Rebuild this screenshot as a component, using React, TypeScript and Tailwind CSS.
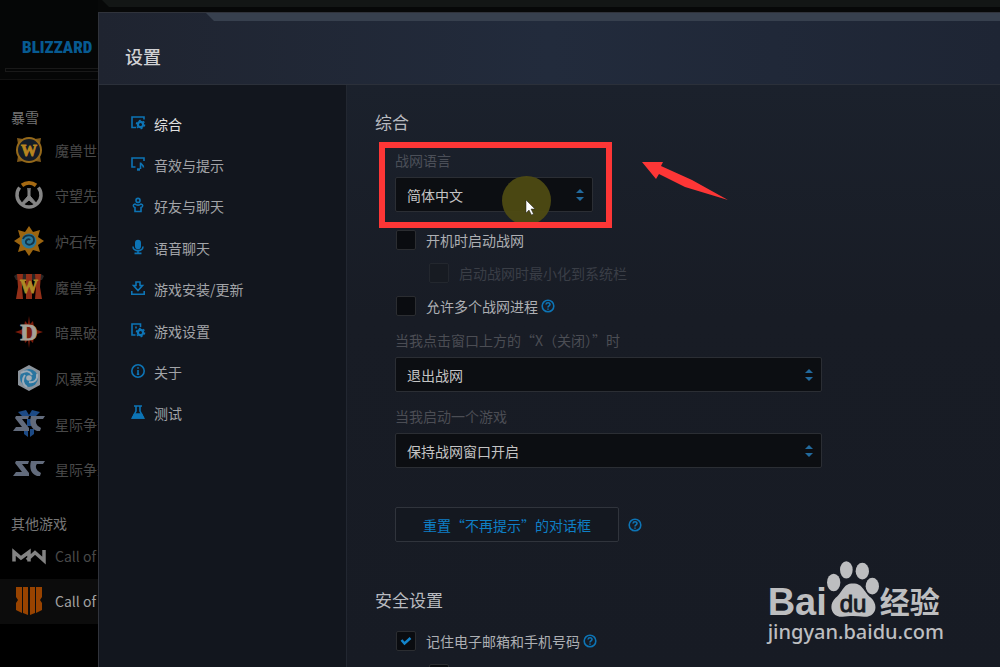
import { useState } from 'react';
import type { ReactNode } from 'react';
import clsx from 'clsx';

type Item = { label: string; icon: ReactNode };

function Letter({ y = 20, size = 17, fill, children }: { y?: number; size?: number; fill: string; children: string }) {
  return (
    <text x="14" y={y} fontSize={size} fontWeight="700" fontFamily="Liberation Serif, serif" textAnchor="middle" fill={fill} stroke={fill} strokeWidth=".8">
      {children}
    </text>
  );
}

function StarCraft({ wings }: { wings?: boolean }) {
  return (
    <>
      {wings && <path d="M3 2l8-2 3 5 3-5 8 2-4 4H7zM9 19h4v8l-4-3zM15 19h4v5l-4 3zM12 9h4v7h-4z" fill="#1c4a86" />}
      <path d="M1 6h13l-1 3H7l7 9v3H-2l3-4h6L0 8z" fill="#626b7c" />
      <path d="M16 6h14l-2 3h-6c-2 2-1 5 1 7l3 2-1 3h-3c-6-2-8-8-6-15z" fill="#626b7c" />
    </>
  );
}

const blizzardGames: Item[] = [
  {
    label: '魔兽世界',
    icon: (
      <>
        <path d="M2 2l6 1h12l6-1-1 6v12l1 6-6-1H8l-6 1 1-6V8z" fill="#80591a" />
        <circle cx="14" cy="14" r="12" fill="#141c26" stroke="#95691a" strokeWidth="2" />
        <Letter fill="#b8861f" size={16} y={20}>W</Letter>
      </>
    ),
  },
  {
    label: '守望先锋',
    icon: (
      <>
        <path d="M7 4.300a12 12 0 0 1 14 0" fill="none" stroke="#a66a12" strokeWidth="4" />
        <path d="M4.600 6.500a12 12 0 1 0 18.800 0" fill="none" stroke="#858585" strokeWidth="3.500" />
        <path d="M13 7v8l-7 8 2 1 6-5 6 5 2-1-7-8V7l-1 7z" fill="#858585" stroke="#858585" />
      </>
    ),
  },
  {
    label: '炉石传说',
    icon: (
      <>
        <path d="M14-1l4 6 7-2-2 7 6 4-6 4 2 7-7-2-4 6-4-6-7 2 2-7-6-4 6-4-2-7 7 2z" fill="#9c6510" />
        <circle cx="14" cy="14" r="7.500" fill="#2b7899" />
        <path d="M8 12c2-5 11-5 11 1 0 5-6 6-8 3-1-3 3-5 4-3" fill="none" stroke="#123346" strokeWidth="1.800" />
      </>
    ),
  },
  {
    label: '魔兽争霸 III',
    icon: (
      <>
        <path d="M-1 3l3-2h24l3 2-2 4H1z" fill="#292525" />
        <path d="M2 1h6l-1 13 1 12H1l2-12zM11 1h6v25h-6zM20 1h6l-1 13 2 12h-7l1-12z" fill="#922f18" />
        <Letter fill="#ae8b27" size={18} y={20}>W</Letter>
      </>
    ),
  },
  {
    label: '暗黑破坏神',
    icon: (
      <>
        <path d="M14-2l1 8 3-3 1 6 3 3 6 2-6 2-3 3-1 6-3-3-1 8-1-8-3 3-1-6-3-3-6-2 6-2 3-3 1-6 3 3z" fill="#7a1b0b" />
        <Letter fill="#a6a298" size={24} y={22}>D</Letter>
      </>
    ),
  },
  {
    label: '风暴英雄',
    icon: (
      <>
        <path d="M14 1l11 6v14l-11 6-11-6V7z" fill="#8b939b" />
        <circle cx="14" cy="14" r="9" fill="#2875a0" />
        <path d="M6 9c5-3 9-2 11 2M22 10c1 6-3 9-8 8M12 23c-5-3-5-8-2-12" fill="none" stroke="#9cabb7" strokeWidth="2" />
        <circle cx="14" cy="14" r="2.800" fill="#a4adb4" />
      </>
    ),
  },
  { label: '星际争霸 II', icon: <StarCraft wings /> },
  { label: '星际争霸', icon: <StarCraft /> },
];

const otherGames: Item[] = [
  {
    label: 'Call of Duty: MW',
    icon: <path d="M-1 19.500V10l7 6 8-6v9.500M12 18l8-7.500 9 8V8" fill="none" stroke="#838383" strokeWidth="3.500" />,
  },
  {
    label: 'Call of Duty: BO4',
    icon: <path d="M1 0h6v26l-6-3v-7l2-3-2-3zM8 0h5v28l-5-2zM15 0h5v26l-5 2zM21 0h6v10l-2 3 2 3v7l-6 3z" fill="#984300" />,
  },
];

function Gear({ cx, cy }: { cx: number; cy: number }) {
  return (
    <>
      <circle cx={cx} cy={cy} r="2.600" strokeWidth="2.200" />
      <circle cx={cx} cy={cy} r="4.200" strokeWidth="1.200" strokeDasharray="2 2.400" />
    </>
  );
}

const sections: Item[] = [
  { label: '综合', icon: <><path d="M5 11.500H1V1h12v2.500" /><Gear cx={9.5} cy={8.5} /></> },
  { label: '音效与提示', icon: <><path d="M4.500 10H1V1h12v3M9.500 12V5.500c0 2 3 2 3 5" /><path d="M6 12.500h3" strokeWidth="2.400" /></> },
  { label: '好友与聊天', icon: <><circle cx="7" cy="2.400" r="2" /><path d="M4 6C1.500 6.500 2 9 4 9.500v4h6v-4c2-.5 2.500-3 0-3.500-1.500 1.500-4.500 1.500-6 0z" /></> },
  { label: '语音聊天', icon: <><rect x="4.800" y=".6" width="4.400" height="7.800" rx="2.200" fill="currentColor" /><path d="M2 6.500c0 5.500 10 5.500 10 0M7 10.500v3M3.500 13.400h7" /></> },
  { label: '游戏安装/更新', icon: <><path d="M.8 10v3.200h12.400V10" /><path d="M5 1h4v3.500h2.500L7 9.500l-4.500-5H5z" /></> },
  { label: '游戏设置', icon: <><path d="M4.500 12H1V1h8.500v3M5 3.500v2" /><Gear cx={9.5} cy={9.5} /></> },
  { label: '关于', icon: <><circle cx="7" cy="7" r="6.200" /><path d="M7 6v4.500M7 3.300v1.400M5.800 10.300h2.400" /></> },
  { label: '测试', icon: <><path d="M3 1h8M5 1v5l-3.500 7h11L9 6V1" /><path d="M3.500 9h7l2 4h-11z" fill="currentColor" /></> },
];

function GameRow({ item, active }: { item: Item; active?: boolean }) {
  return (
    <li className={clsx('overflow-hidden', active && 'bg-[#0c0c0c]')}>
      <a href="#" className={clsx('flex h-full items-center gap-3 pl-[15px] text-sm whitespace-nowrap', active ? 'text-[#a2a2a2]' : 'text-[#494949]')}>
        <svg viewBox="0 0 28 28" className="size-7 shrink-0 overflow-visible" aria-hidden="true">{item.icon}</svg>
        {item.label}
      </a>
    </li>
  );
}

function Help() {
  return (
    <button type="button" aria-label="帮助" className="text-[#0d74b5]">
      <svg viewBox="0 0 14 14" className="size-[14px]" fill="none" stroke="currentColor" strokeWidth="1.600">
        <circle cx="7" cy="7" r="5.800" />
        <path d="M5 5.500c.3-2.400 4-2.200 4 0 0 1.500-2 1.300-2 3M7 9.500v1.200" />
      </svg>
    </button>
  );
}

function Select({ id, value, className }: { id: string; value: string; className?: string }) {
  return (
    <div className={clsx('grid items-center', className)}>
      <select id={id} className="col-start-1 row-start-1 h-[35px] w-full appearance-none rounded-xs border border-[#2b2e34] bg-[#0c0e12] px-[11px] text-sm text-[#c4c4c4]">
        <option>{value}</option>
      </select>
      <svg viewBox="0 0 8 12" className="pointer-events-none col-start-1 row-start-1 mr-[9px] h-3 w-2 justify-self-end" fill="#226a9e" aria-hidden="true">
        <path d="M4 0l4 4H0zM4 12L0 8h8z" />
      </svg>
    </div>
  );
}

type CheckProps = { id: string; label: string; checked?: boolean; disabled?: boolean; nested?: boolean; help?: boolean };

function Check({ id, label, checked, disabled, nested, help }: CheckProps) {
  return (
    <div className={clsx('flex h-5 items-center', nested && 'pl-[33px]')}>
      <span className="grid size-5 shrink-0 place-items-center">
        <input
          id={id}
          type="checkbox"
          defaultChecked={checked}
          disabled={disabled}
          className={clsx('peer col-start-1 row-start-1 size-5 appearance-none rounded-xs border', disabled ? 'border-[#23272e] bg-[#171b22]' : 'border-[#2b2d31] bg-[#0a0c10]')}
        />
        <svg viewBox="0 0 12 10" className="pointer-events-none invisible col-start-1 row-start-1 h-[10px] w-3 peer-checked:visible" fill="none" stroke="#1284cb" strokeWidth="2.500" aria-hidden="true">
          <path d="M1.500 4l3 3.500L10.500 2" />
        </svg>
      </span>
      <label htmlFor={id} className={clsx('ml-[10px] text-sm', disabled ? 'text-[#3a3e46]' : 'text-[#adafb3]')}>{label}</label>
      {help && <span className="ml-[3px] flex"><Help /></span>}
    </div>
  );
}

function Pointer() {
  return (
    <div className="pointer-events-none absolute top-[26px] left-[107px] size-[49px] rounded-full bg-[#4e4b13]/95">
      <svg viewBox="0 0 10 16" className="absolute top-[24px] left-[24px] h-4 w-[10px] overflow-visible" aria-hidden="true">
        <path d="M0 0v13l3-3 2.500 5 2-1-2.500-5h4z" fill="#fff" stroke="#222" strokeWidth=".5" />
      </svg>
    </div>
  );
}

function Watermark() {
  return (
    <div className="pointer-events-none absolute right-[56px] bottom-[21px] text-[#bdbec0]">
      <div className="flex h-[58px] items-end">
        <span className="font-['Liberation_Sans',sans-serif] text-[38px] leading-8 font-bold">Bai</span>
        <svg viewBox="234 32 156 170" className="h-[57px] w-[52px]" fill="currentColor">
          <ellipse cx="254" cy="96" rx="20" ry="26" />
          <ellipse cx="292" cy="58" rx="19" ry="26" />
          <ellipse cx="340" cy="62" rx="20" ry="25" />
          <ellipse cx="370" cy="107" rx="20" ry="25" />
          <path d="M312 99c-31 0-29 25-52 43-25 24-11 59 21 57 18-3 44-3 64 0 34 2 46-33 21-57-23-18-23-43-54-43z" />
          <text x="312" y="184" textAnchor="middle" fontSize="72" fontFamily="Liberation Sans, sans-serif" fill="#181c25" stroke="#181c25" strokeWidth="3">du</text>
        </svg>
        <span className="ml-px text-[30px] leading-9 font-bold">经验</span>
      </div>
      <div className="font-['Noto_Sans',sans-serif] text-xl leading-7 font-medium">jingyan.baidu.com</div>
    </div>
  );
}

export default function App() {
  const [section, setSection] = useState('综合');

  return (
    <div lang="zh-CN" className="relative flex h-screen overflow-hidden bg-black font-['Noto_Sans_CJK_SC',sans-serif]">
      <aside className="w-[98px] shrink-0 overflow-hidden">
        <div className="h-20 border-b border-[#111] bg-[#050606] pt-[31px]">
          <div className="ml-[22px] font-['Liberation_Sans_Narrow','Roboto_Condensed',sans-serif] text-[17px] leading-8 font-black text-[#075a91]">BLIZZARD</div>
          <div className="mt-[5px] ml-[5px] h-1 border border-r-0 border-[#191919]" />
        </div>
        <h2 className="mt-[27px] pl-[11px] text-sm leading-5 text-[#777]">暴雪</h2>
        <ul className="grid h-[365px] grid-rows-8">
          {blizzardGames.map((g) => <GameRow key={g.label} item={g} />)}
        </ul>
        <h2 className="mt-[21px] pl-[11px] text-sm leading-5 text-[#777]">其他游戏</h2>
        <ul className="grid h-[91px] grid-rows-2">
          {otherGames.map((g, i) => <GameRow key={g.label} item={g} active={i === 1} />)}
        </ul>
      </aside>

      <div className="flex min-w-0 flex-1 flex-col">
        <div className="h-3 shrink-0 bg-[#070808]">
          <div className="ml-1 h-[7px] bg-[#131615] [clip-path:polygon(0_0,100%_0,100%_100%,7px_100%)]" />
        </div>
        <div className="flex min-h-0 flex-1 flex-col border-t border-l border-[#30333b]">
          <header className="h-[72px] shrink-0 border-b border-[#2b303a] bg-linear-to-r from-[#1f2430] via-[#222b3c] to-[#1e2534]">
            <div className="ml-[107px] h-2 bg-[#37404e] [clip-path:polygon(0_0,100%_0,100%_100%,8px_100%)]" />
            <h1 className="mt-[21px] pl-[26px] text-lg leading-7 font-medium text-[#d0d1d4]">设置</h1>
          </header>

          <div className="flex min-h-0 flex-1">
            <nav className="w-[247px] shrink-0 bg-[#12161e] pt-[18px]">
              <ul className="grid h-[331px] grid-rows-8">
                {sections.map((s) => (
                  <li key={s.label}>
                    <button
                      type="button"
                      onClick={() => setSection(s.label)}
                      className={clsx('flex h-full w-full items-center gap-[9px] pl-8 text-sm', section === s.label ? 'text-[#e0e0e0]' : 'text-[#a2a4a8]')}
                    >
                      <svg viewBox="0 0 14 14" className="mb-0.5 size-[14px] shrink-0 overflow-visible text-[#0d74b5]" fill="none" stroke="currentColor" strokeWidth="1.600" aria-hidden="true">{s.icon}</svg>
                      {s.label}
                    </button>
                  </li>
                ))}
              </ul>
            </nav>

            <main className="min-w-0 flex-1 overflow-y-auto border-l border-[#222731] bg-linear-to-b from-[#1b212c] via-[#181c25] via-40% to-[#171b24] pt-[25px] pl-7 [scrollbar-width:none]">
              <h2 className="text-[17px] leading-6 text-[#b9bbc0]">综合</h2>
              <div className="mt-4 pl-5">
                <div className="relative w-[198px]">
                  <label htmlFor="lang" className="block text-sm leading-5 text-[#4b4f58]">战网语言</label>
                  <Select id="lang" value="简体中文" className="mt-[7px]" />
                  <Pointer />
                  <div className="pointer-events-none absolute -top-2 -right-[19px] -bottom-4 -left-4 border-6 border-[#fd3636]" />
                  <svg viewBox="0 0 86 40" className="pointer-events-none absolute top-[12px] left-[247px] h-10 w-[86px]" fill="#fd3636" aria-hidden="true">
                    <path d="M0 0l21 0-2 4 31 14 36 20-43-13L17 12l-3 5z" />
                  </svg>
                </div>

                <div className="mt-[18px] flex flex-col gap-[13px] pl-px">
                  <Check id="autostart" label="开机时启动战网" />
                  <Check id="minimize" label="启动战网时最小化到系统栏" disabled nested />
                  <Check id="multi" label="允许多个战网进程" help />
                </div>

                <label htmlFor="on-close" className="mt-[14px] block text-sm leading-5 text-[#4b4d54]">当我点击窗口上方的“X（关闭）”时</label>
                <Select id="on-close" value="退出战网" className="mt-[7px] w-[427px] max-w-full" />
                <label htmlFor="on-launch" className="mt-[14px] block text-sm leading-5 text-[#4b4d54]">当我启动一个游戏</label>
                <Select id="on-launch" value="保持战网窗口开启" className="mt-[7px] w-[427px] max-w-full" />

                <div className="mt-[39px] flex items-center gap-[9px]">
                  <button type="button" className="h-[35px] w-56 rounded-xs border border-[#30343c] bg-[#141820] text-sm text-[#0e7fc5]">重置“不再提示”的对话框</button>
                  <Help />
                </div>
              </div>

              <h2 className="mt-[46px] text-[17px] leading-6 text-[#b9bbc0]">安全设置</h2>
              <div className="mt-[19px] flex flex-col gap-[13px] pl-[21px]">
                <Check id="remember" label="记住电子邮箱和手机号码" checked help />
                <Check id="signin" label="自动登录战网" nested />
              </div>
            </main>
          </div>
        </div>
      </div>
      <Watermark />
    </div>
  );
}
